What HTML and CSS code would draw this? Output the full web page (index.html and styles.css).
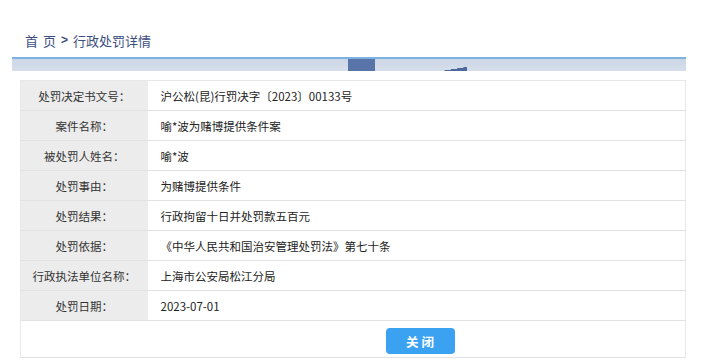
FILE: index.html
```html
<!DOCTYPE html>
<html lang="zh-CN">
<head>
    <meta charset="UTF-8">
    <title>行政处罚详情</title>
    <link rel="stylesheet" href="styles.css">
</head>
<body>
    <div class="page">
        <div class="crumb"><span class="home">首 页</span><span class="sep">&gt;</span>行政处罚详情</div>
        <div class="banner"></div>
        <table class="detail">
            <tr>
                <th>处罚决定书文号：</th>
                <td>沪公松(昆)行罚决字〔2023〕00133号</td>
            </tr>
            <tr>
                <th>案件名称：</th>
                <td>喻*波为赌博提供条件案</td>
            </tr>
            <tr>
                <th>被处罚人姓名：</th>
                <td>喻*波</td>
            </tr>
            <tr>
                <th>处罚事由：</th>
                <td>为赌博提供条件</td>
            </tr>
            <tr>
                <th>处罚结果：</th>
                <td>行政拘留十日并处罚款五百元</td>
            </tr>
            <tr>
                <th>处罚依据：</th>
                <td>《中华人民共和国治安管理处罚法》第七十条</td>
            </tr>
            <tr>
                <th>行政执法单位名称：</th>
                <td>上海市公安局松江分局</td>
            </tr>
            <tr>
                <th>处罚日期：</th>
                <td>2023-07-01</td>
            </tr>
            <tr class="actions">
                <th></th>
                <td><button class="btn-close">关 闭</button></td>
            </tr>
        </table>
    </div>
</body>
</html>
```

FILE: styles.css
```css
* {
    margin: 0;
    padding: 0;
    box-sizing: border-box;
}

body {
    font-family: "Noto Sans CJK SC", "Liberation Sans", sans-serif;
    background: #fff;
    color: #333;
}

.page {
    width: 674px;
    margin-left: 12px;
    padding-top: 30px;
}

.crumb {
    display: flex;
    align-items: center;
    height: 20px;
    padding-left: 13px;
    font-size: 13px;
    color: #3e4e80;
    margin-bottom: 7px;
}

.crumb .home {
    letter-spacing: 1px;
}

.crumb .sep {
    font-family: "Liberation Sans", sans-serif;
    font-weight: bold;
    font-size: 12px;
    margin: 0 5px 0 4px;
}

/* 标题栏：蓝色顶线 + 浅灰蓝底，带两块深色装饰 */
.banner {
    height: 14px;
    border-top: 2px solid #7cb2e2;
    background:
        linear-gradient(#5874a8, #5874a8) 336px 0 / 27px 12px no-repeat,
        linear-gradient(to top left, #4c689c 50%, transparent 52%) 430px 8px / 25px 4px no-repeat,
        linear-gradient(#ccd6e5, #d6deea);
    margin-bottom: 9px;
}

.detail {
    margin-left: 8px;
    width: 666px;
    border-collapse: collapse;
    font-size: 11.5px;
    border: 1px solid #e8e8e8;
}

.detail tr {
    height: 30px;
    border-bottom: 1px solid #e2e2e2;
}

.detail th {
    width: 127px;
    background: #ececec;
    font-weight: normal;
    text-align: center;
    color: #333;
}

.detail td {
    padding-left: 13px;
    color: #222;
}

.detail .actions {
    height: 37px;
}

.detail .actions th {
    background: #fff;
}

.detail .actions td {
    padding: 7px 0 3px;
    vertical-align: top;
}

.btn-close {
    display: block;
    width: 69px;
    height: 26px;
    margin-left: 238px;
    border: none;
    border-radius: 4px;
    background: #3ba2f2;
    color: #fff;
    font-family: inherit;
    font-size: 12.5px;
    font-weight: bold;
}
```
